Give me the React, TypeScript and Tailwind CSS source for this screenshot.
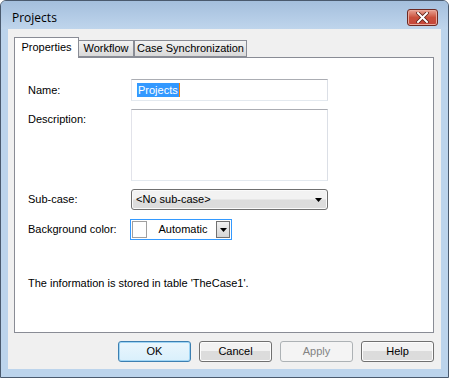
import React from "react";

const font = { fontFamily: '"Liberation Sans", Arial, sans-serif' };

function Btn({ label, primary, disabled }: { label: string; primary?: boolean; disabled?: boolean }) {
  const base = "w-[73px] h-[21px] rounded-[3px] border flex items-center justify-center text-[11px]";
  if (disabled)
    return <div className={`${base} border-[#adb2b5] bg-[#f4f4f4] text-[#838383]`}>{label}</div>;
  if (primary)
    return (
      <div className={`${base} border-[#3c7fb1] bg-gradient-to-b from-[#eaf6fd] to-[#d9f0fc] text-black shadow-[inset_0_0_0_1px_#9fd5f5]`}>
        {label}
      </div>
    );
  return (
    <div className={`${base} border-[#707070] bg-gradient-to-b from-[#f2f2f2] from-50% to-[#dcdcdc] to-50% text-black shadow-[inset_0_0_0_1px_#fcfcfc]`}>
      {label}
    </div>
  );
}

export default function App() {
  return (
    <div className="w-[449px] h-[378px] bg-white" style={font}>
      <div className="w-[449px] h-[378px] rounded-t-[6px] border border-[#4a5a6e] bg-[#bcd4ec] flex flex-col">
        {/* title bar */}
        <div className="h-[28px] shrink-0 rounded-t-[5px] bg-gradient-to-b from-[#a4bfdd] to-[#bfd5ec] flex items-center justify-between pl-[11px] pr-[10px]">
          <span className="text-[12px] text-black pt-[5px]" style={{ fontFamily: '"Open Sans", "Noto Sans", sans-serif' }}>
            Projects
          </span>
          <div className="mt-[4px] w-[31px] h-[17px] rounded-[3px] border border-[#6d2a23] bg-gradient-to-b from-[#e8a294] via-[#c9503c] to-[#c5453a] flex items-center justify-center shadow-[inset_0_0_0_1px_#e9a99c]">
            <svg width="13" height="11" viewBox="0 0 13 11">
              <path d="M2 1 L11 10 M11 1 L2 10" stroke="#5a1f18" strokeWidth="3.6" strokeLinecap="square" />
              <path d="M2 1 L11 10 M11 1 L2 10" stroke="#ffffff" strokeWidth="2" strokeLinecap="square" />
            </svg>
          </div>
        </div>
        {/* client */}
        <div className="mx-[7px] h-[340px] bg-[#f0f0f0] flex flex-col px-[6px] pt-[8px]">
          {/* tabs */}
          <div className="flex items-end h-[21px] relative z-10 text-[11px] text-black">
            <div className="w-[65px] h-[21px] bg-white border border-b-0 border-[#898c95] flex items-center justify-center pb-[1px]">
              Properties
            </div>
            <div className="w-[55px] h-[17px] mb-[1px] bg-gradient-to-b from-[#f3f3f3] to-[#d9d9d9] border border-[#898c95] border-l-0 flex items-center justify-center">
              Workflow
            </div>
            <div className="w-[113px] h-[17px] mb-[1px] bg-gradient-to-b from-[#f3f3f3] to-[#d9d9d9] border border-[#898c95] flex items-center justify-center">
              Case Synchronization
            </div>
          </div>
          {/* panel */}
          <div className="-mt-[1px] w-[420px] h-[276px] bg-white border border-[#898c95] text-[11px] text-black pl-[13px] pt-[21px] flex flex-col">
            <div className="flex items-center h-[22px]">
              <div className="w-[103px]">Name:</div>
              <div className="w-[197px] h-[22px] border border-[#abadb3] border-l-[#e2e3ea] border-r-[#dbdfe6] border-b-[#e3e9ef] flex items-center pl-[5px]">
                <span className="bg-[#3399ff] text-white leading-[14px] px-[1px]">Projects</span>
                <span className="w-[1px] h-[14px] bg-[#ff7f00]" />
              </div>
            </div>
            <div className="flex items-start mt-[8px]">
              <div className="w-[103px] pt-[2px]">Description:</div>
              <div className="w-[197px] h-[72px] border border-[#abadb3] border-l-[#e2e3ea] border-r-[#dbdfe6] border-b-[#e3e9ef]" />
            </div>
            <div className="flex items-center mt-[8px] h-[21px]">
              <div className="w-[103px]">Sub-case:</div>
              <div className="w-[197px] h-[21px] rounded-[3px] border border-[#707070] bg-gradient-to-b from-[#f2f2f2] from-45% to-[#dcdcdc] to-55% shadow-[inset_0_0_0_1px_#fafafa] flex items-center justify-between pl-[4px] pr-[5px]">
                <span>&lt;No sub-case&gt;</span>
                <svg width="7" height="4" viewBox="0 0 7 4">
                  <path d="M0 0 H7 L3.5 4 Z" fill="#000" />
                </svg>
              </div>
            </div>
            <div className="flex items-center mt-[9px] h-[21px]">
              <div className="w-[102px]">Background color:</div>
              <div className="w-[102px] h-[21px] border border-[#3399ff] flex items-center pl-[1px]">
                <div className="w-[15px] h-[17px] border border-[#a0a0a0] bg-white" />
                <div className="flex-1 text-center pl-[3px]">Automatic</div>
                <div className="w-[14px] h-[17px] mr-[1px] border border-[#707070] bg-gradient-to-b from-[#f2f2f2] to-[#d4d4d4] flex items-center justify-center">
                  <svg width="7" height="4" viewBox="0 0 7 4">
                    <path d="M0 0 H7 L3.5 4 Z" fill="#000" />
                  </svg>
                </div>
              </div>
            </div>
            <div className="mt-[35px]">The information is stored in table 'TheCase1'.</div>
          </div>
          {/* buttons */}
          <div className="flex justify-end gap-[8px] mt-[8px] w-[420px]">
            <Btn label="OK" primary />
            <Btn label="Cancel" />
            <Btn label="Apply" disabled />
            <Btn label="Help" />
          </div>
        </div>
      </div>
    </div>
  );
}
